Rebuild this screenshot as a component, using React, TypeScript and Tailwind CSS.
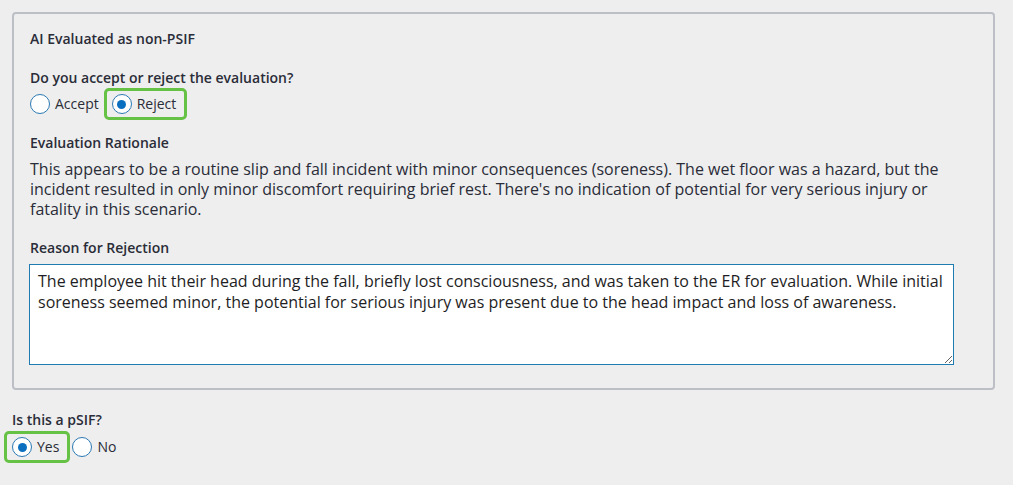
import { useState } from 'react';

type Option = { value: string; label: string };

function RadioGroup({
  options,
  value,
  onChange,
}: {
  options: Option[];
  value: string;
  onChange: (v: string) => void;
}) {
  return (
    <div className="flex items-center gap-[13px] h-[24px]">
      {options.map((o) => {
        const checked = o.value === value;
        return (
          <label
            key={o.value}
            className="relative flex items-center gap-[5px] cursor-pointer"
            onClick={() => onChange(o.value)}
          >
            {checked && (
              <span className="absolute -left-[8px] -right-[11px] -top-[6px] -bottom-[6px] border-[3px] border-[#66c244] rounded-[5px]" />
            )}
            <span className="flex items-center justify-center w-[20px] h-[20px] rounded-full border border-[#2b79b3] bg-white">
              {checked && <span className="w-[9px] h-[9px] rounded-full bg-[#0b6fc0]" />}
            </span>
            <span className="text-[14px] leading-[20px]">{o.label}</span>
          </label>
        );
      })}
    </div>
  );
}

export default function App() {
  const [decision, setDecision] = useState('reject');
  const [psif, setPsif] = useState('yes');
  const [reason, setReason] = useState(
    'The employee hit their head during the fall, briefly lost consciousness, and was taken to the ER for evaluation. While initial soreness seemed minor, the potential for serious injury was present due to the head impact and loss of awareness.'
  );

  return (
    <div className="min-h-screen bg-[#eeeeee] p-[12px] pr-[18px] font-['Open_Sans',sans-serif] text-[#2a2c38]">
      <div className="border-2 border-[#bcbfc6] rounded-[4px] px-[16px] pt-[15px] pb-[23px]">
        <div className="text-[14px] font-semibold leading-[20px]">AI Evaluated as non-PSIF</div>

        <div className="mt-[19px] text-[14px] font-semibold leading-[20px]">
          Do you accept or reject the evaluation?
        </div>
        <div className="mt-[4px]">
          <RadioGroup
            options={[
              { value: 'accept', label: 'Accept' },
              { value: 'reject', label: 'Reject' },
            ]}
            value={decision}
            onChange={setDecision}
          />
        </div>

        <div className="mt-[17px] text-[14px] font-semibold leading-[20px]">Evaluation Rationale</div>
        <p className="mt-[6px] text-[16px] leading-[20px]">
          This appears to be a routine slip and fall incident with minor consequences (soreness). The wet floor was a
          hazard, but the incident resulted in only minor discomfort requiring brief rest. There's no indication of
          potential for very serious injury or fatality in this scenario.
        </p>

        <div className="mt-[19px] text-[14px] font-semibold leading-[20px]">Reason for Rejection</div>
        <textarea
          value={reason}
          onChange={(e) => setReason(e.target.value)}
          className="-ml-[1px] mt-[6px] block w-[925px] h-[101px] border border-[#1f7bb0] bg-white px-[8px] pt-[6px] text-[16px] leading-[21px] text-[#1e1e24] outline-none"
        />
      </div>

      <div className="mt-[20px] text-[14px] font-semibold leading-[20px]">Is this a pSIF?</div>
      <div className="mt-[5px]">
        <RadioGroup
          options={[
            { value: 'yes', label: 'Yes' },
            { value: 'no', label: 'No' },
          ]}
          value={psif}
          onChange={setPsif}
        />
      </div>
    </div>
  );
}
